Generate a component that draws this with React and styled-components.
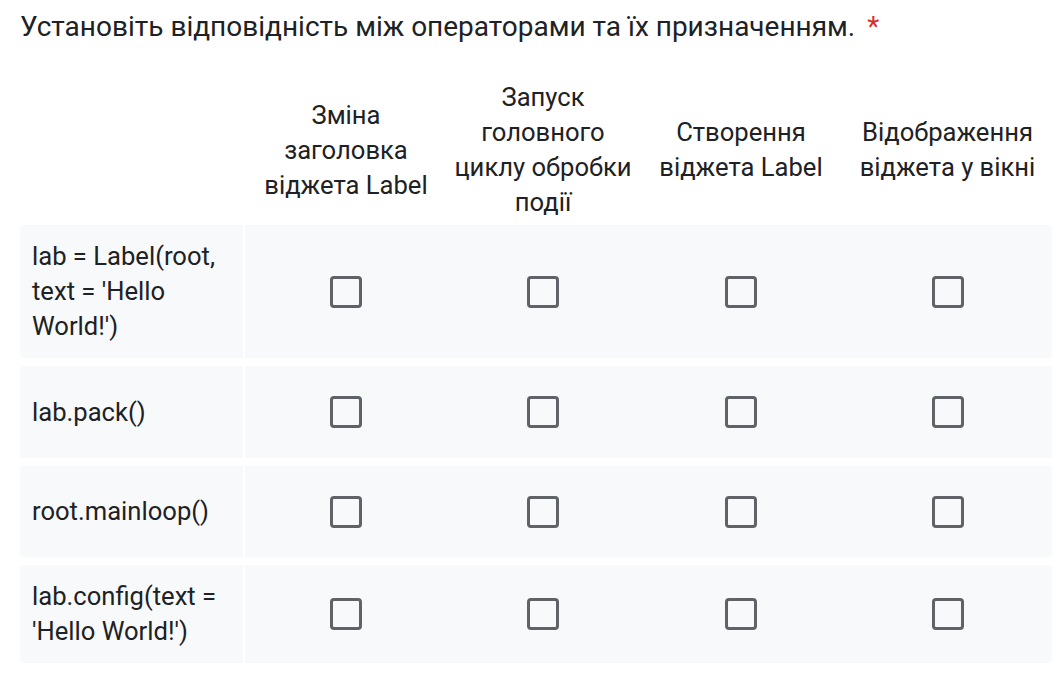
import React from "react";
import styled, { createGlobalStyle } from "styled-components";

const Global = createGlobalStyle`
  html, body { margin: 0; padding: 0; background: #ffffff; }
  body { font-family: Roboto, "Noto Sans", "Liberation Sans", sans-serif; color: #202124; }
`;

const Page = styled.div`
  padding: 10px 5px 0 20px;
`;

const Title = styled.div`
  font-size: 28px;
  line-height: 34px;
  color: #202124;
`;

const Required = styled.span`
  color: #d93025;
  padding-left: 12px;
`;

const Grid = styled.div`
  margin-top: 36px;
  display: flex;
  flex-direction: column;
  gap: 8px;
  width: 1032px;
`;

const cols = "225px 202px 192px 204px 209px";

const HeaderRow = styled.div`
  display: grid;
  grid-template-columns: ${cols};
  margin-bottom: -3px;
`;

const HeadCell = styled.div`
  display: flex;
  align-items: center;
  justify-content: center;
  text-align: center;
  font-size: 25.6px;
  line-height: 35px;
  padding: 0 4px;
  white-space: nowrap;
`;

const Row = styled.div`
  display: grid;
  grid-template-columns: ${cols};
  min-height: ${(p) => p.$min}px;
`;

const LabelCell = styled.div`
  background: #f8f9fa;
  border-radius: 4px 0 0 4px;
  padding: 14px 12px;
  font-size: 25.6px;
  line-height: 35px;
  white-space: nowrap;
  display: flex;
  align-items: center;
  border-right: 2px solid #ffffff;
`;

const BoxCell = styled.div`
  background: #f8f9fa;
  display: flex;
  align-items: center;
  justify-content: center;
  border-radius: ${(p) => (p.$last ? "0 4px 4px 0" : "0")};
`;

const Box = styled.div`
  width: 26px;
  height: 26px;
  border: 3.5px solid #5f6368;
  border-radius: 4px;
`;

const headers = [
  ["Зміна", "заголовка", "віджета Label"],
  ["Запуск", "головного", "циклу обробки", "події"],
  ["Створення", "віджета Label"],
  ["Відображення", "віджета у вікні"],
];

const rows = [
  { lines: ["lab = Label(root,", "text = 'Hello", "World!')"], min: 133 },
  { lines: ["lab.pack()"], min: 92 },
  { lines: ["root.mainloop()"], min: 91 },
  { lines: ["lab.config(text =", "'Hello World!')"], min: 97 },
];

const Lines = ({ lines }) =>
  lines.map((l, i) => (
    <React.Fragment key={i}>
      {l}
      {i < lines.length - 1 && <br />}
    </React.Fragment>
  ));

export default function App() {
  return (
    <>
      <Global />
      <Page>
        <Title>
          Установіть відповідність між операторами та їх призначенням.
          <Required>*</Required>
        </Title>
        <Grid>
          <HeaderRow>
            <div />
            {headers.map((h, i) => (
              <HeadCell key={i}>
                <div>
                  <Lines lines={h} />
                </div>
              </HeadCell>
            ))}
          </HeaderRow>
          {rows.map((r, i) => (
            <Row key={i} $min={r.min}>
              <LabelCell>
                <div>
                  <Lines lines={r.lines} />
                </div>
              </LabelCell>
              {[0, 1, 2, 3].map((c) => (
                <BoxCell key={c} $last={c === 3}>
                  <Box />
                </BoxCell>
              ))}
            </Row>
          ))}
        </Grid>
      </Page>
    </>
  );
}
